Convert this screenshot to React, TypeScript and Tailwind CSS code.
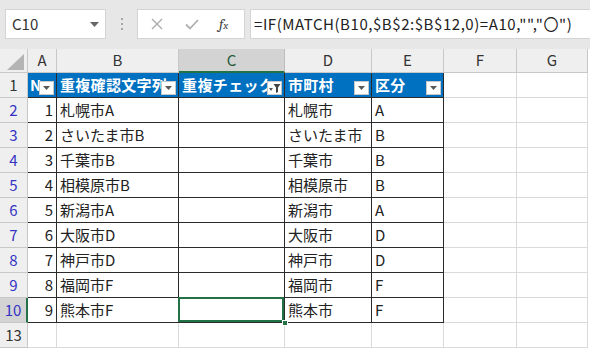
import { FC } from 'react';

const font = '"Noto Sans CJK JP", "Noto Sans", sans-serif';

const rows: [number, string, string, string, string][] = [
  [1, '札幌市A', '', '札幌市', 'A'],
  [2, 'さいたま市B', '', 'さいたま市', 'B'],
  [3, '千葉市B', '', '千葉市', 'B'],
  [4, '相模原市B', '', '相模原市', 'B'],
  [5, '新潟市A', '', '新潟市', 'A'],
  [6, '大阪市D', '', '大阪市', 'D'],
  [7, '神戸市D', '', '神戸市', 'D'],
  [8, '福岡市F', '', '福岡市', 'F'],
  [9, '熊本市F', '', '熊本市', 'F'],
];

const gridCols = 'grid grid-cols-[28px_29px_122px_106px_87px_72px_73px_71px]';

const FilterButton: FC<{ filtered?: boolean }> = ({ filtered }) => (
  <span className="absolute bottom-[2px] right-[2px] flex h-[14px] w-[15px] items-center justify-center border border-[#c8c8c8] bg-white">
    {filtered ? (
      <svg width="13" height="12" viewBox="0 0 13 12">
        <polygon points="1,6 5,6 3,9" fill="#555" />
        <polygon points="5.5,2 12.5,2 10,5.5 10,10 8,11 8,5.5" fill="#444" />
      </svg>
    ) : (
      <svg width="9" height="6" viewBox="0 0 9 6">
        <polygon points="1,1 8,1 4.5,5" fill="#595959" />
      </svg>
    )}
  </span>
);

const ColHeader: FC<{ label: string; selected?: boolean }> = ({ label, selected }) => (
  <div
    className={
      selected
        ? 'flex items-center justify-center border-r border-b-2 border-r-[#bdbdbd] border-b-[#217346] bg-[#d3d3d3] text-[15px] text-[#1f5c3a]'
        : 'flex items-center justify-center border-r border-b border-[#c8c8c8] bg-[#efefef] text-[15px] text-[#333]'
    }
  >
    {label}
  </div>
);

const RowHeader: FC<{ n: number; blue?: boolean; selected?: boolean }> = ({ n, blue, selected }) => (
  <div
    className={
      (selected
        ? 'border-r-2 border-b border-r-[#217346] border-b-[#c8c8c8] bg-[#d3d3d3] '
        : 'border-r border-b border-[#c8c8c8] bg-[#efefef] ') +
      'flex items-center justify-center text-[15px] ' +
      (blue ? 'text-[#3434c4]' : 'text-[#333]')
    }
  >
    {n}
  </div>
);

const Plain: FC = () => <div className="border-r border-b border-[#dadada]" />;

const App: FC = () => {
  return (
    <div className="h-[348px] w-[590px] overflow-hidden bg-white" style={{ fontFamily: font }}>
      {/* formula bar */}
      <div className="flex h-[49px] items-start bg-[#e7e7e7] pt-[9px]">
        <div className="ml-[5px] flex h-[30px] w-[101px] items-center justify-between border border-[#d4d4d4] bg-white pl-[6px] pr-[6px]">
          <span className="text-[15px] text-[#333]">C10</span>
          <svg width="9" height="5" viewBox="0 0 9 5">
            <polygon points="0,0 9,0 4.5,5" fill="#666" />
          </svg>
        </div>
        <div className="flex h-[30px] w-[31px] flex-col items-center justify-center gap-[3px]">
          <span className="h-[2px] w-[2px] bg-[#a8a8a8]" />
          <span className="h-[2px] w-[2px] bg-[#a8a8a8]" />
          <span className="h-[2px] w-[2px] bg-[#a8a8a8]" />
        </div>
        <div className="flex h-[30px] w-[108px] items-center border border-[#d4d4d4] bg-white">
          <svg className="ml-[13px]" width="12" height="12" viewBox="0 0 12 12">
            <path d="M1 1L11 11M11 1L1 11" stroke="#aaa" strokeWidth="1.3" />
          </svg>
          <svg className="ml-[22px]" width="14" height="11" viewBox="0 0 14 11">
            <path d="M1 5.5L5 9.5L13 1" stroke="#b0b0b0" strokeWidth="1.8" fill="none" />
          </svg>
          <span className="ml-[20px] font-serif text-[15px] italic leading-none text-[#444]">
            f<span className="text-[11px]">x</span>
          </span>
        </div>
        <div className="ml-[5px] flex h-[30px] flex-1 items-center border border-r-0 border-[#d4d4d4] bg-white pl-[3px]">
          <span className="whitespace-nowrap text-[15px] tracking-[0.55px] text-[#222]">
            =IF(MATCH(B10,$B$2:$B$12,0)=A10,"","〇")
          </span>
        </div>
      </div>

      {/* sheet */}
      <div className={gridCols + ' auto-rows-[25px] grid-rows-[24px]'}>
        <div className="relative border-r border-b border-[#c8c8c8] bg-[#efefef]">
          <svg className="absolute bottom-[2px] right-[3px]" width="17" height="16" viewBox="0 0 17 16">
            <polygon points="17,0 17,16 0,16" fill="#b4b4b4" />
          </svg>
        </div>
        <ColHeader label="A" />
        <ColHeader label="B" />
        <ColHeader label="C" selected />
        <ColHeader label="D" />
        <ColHeader label="E" />
        <ColHeader label="F" />
        <ColHeader label="G" />

        {/* table header */}
        <RowHeader n={1} />
        <div className="relative flex items-center overflow-hidden border-r border-b border-[#2b2b2b] bg-[#0070c0] pl-[2px] text-[15px] font-bold text-white">
          N
          <FilterButton />
        </div>
        <div className="relative flex items-center overflow-hidden whitespace-nowrap border-r border-b border-[#2b2b2b] bg-[#0070c0] pl-[3px] text-[15px] font-bold tracking-[0.3px] text-white">
          重複確認文字列
          <FilterButton />
        </div>
        <div className="relative flex items-center overflow-hidden whitespace-nowrap border-r border-b border-[#2b2b2b] bg-[#0070c0] pl-[3px] text-[15px] font-bold tracking-[0.4px] text-white">
          重複チェック
          <FilterButton filtered />
        </div>
        <div className="relative flex items-center overflow-hidden whitespace-nowrap border-r border-b border-[#2b2b2b] bg-[#0070c0] pl-[3px] text-[15px] font-bold tracking-[0.3px] text-white">
          市町村
          <FilterButton />
        </div>
        <div className="relative flex items-center overflow-hidden whitespace-nowrap border-r border-b border-[#2b2b2b] bg-[#0070c0] pl-[3px] text-[15px] font-bold tracking-[0.3px] text-white">
          区分
          <FilterButton />
        </div>
        <Plain />
        <Plain />

        {rows.map(([no, key, check, city, kubun], i) => {
          const last = i === rows.length - 1;
          const cell = 'flex items-center whitespace-nowrap border-r border-b border-[#2b2b2b] text-[15px] text-[#222]';
          return [
            <RowHeader key={`h${no}`} n={no + 1} blue selected={last} />,
            <div key={`a${no}`} className={cell + ' justify-end pr-[3px]'}>
              {no}
            </div>,
            <div key={`b${no}`} className={cell + ' pl-[3px]'}>
              {key}
            </div>,
            <div key={`c${no}`} className={cell + ' relative pl-[3px]'}>
              {check}
              {last && (
                <>
                  <span className="absolute -left-px -top-px bottom-0 right-0 border-2 border-[#217346]" />
                  <span className="absolute -bottom-[4px] -right-[4px] h-[6px] w-[6px] border border-white bg-[#217346]" />
                </>
              )}
            </div>,
            <div key={`d${no}`} className={cell + ' pl-[3px]'}>
              {city}
            </div>,
            <div key={`e${no}`} className={cell + ' pl-[3px]'}>
              {kubun}
            </div>,
            <Plain key={`f${no}`} />,
            <Plain key={`g${no}`} />,
          ];
        })}

        <RowHeader n={13} />
        <Plain />
        <Plain />
        <Plain />
        <Plain />
        <Plain />
        <Plain />
        <Plain />
      </div>
    </div>
  );
};

export default App;
